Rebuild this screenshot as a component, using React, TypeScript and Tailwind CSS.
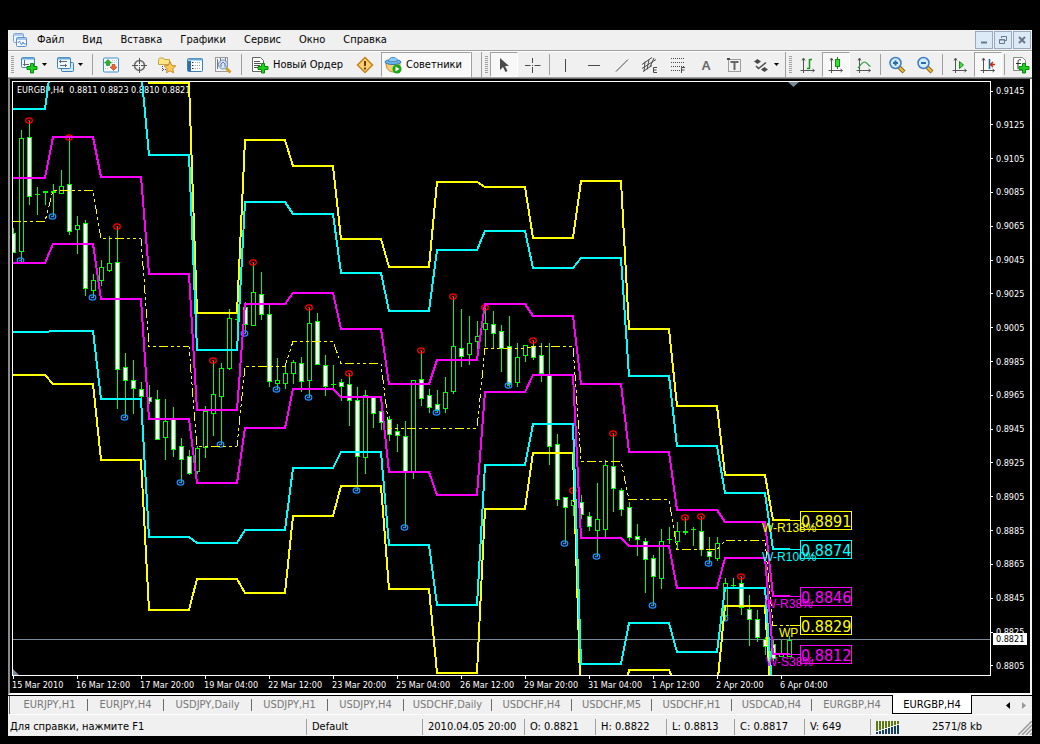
import type { ReactNode } from 'react'

const UI_FONT = "font-['DejaVu_Sans_Condensed','Noto_Sans',sans-serif]"

const MENU = ['Файл', 'Вид', 'Вставка', 'Графики', 'Сервис', 'Окно', 'Справка']

const TABS = [
  { name: 'EURJPY,H1', width: 'w-[76px]' },
  { name: 'EURJPY,H4', width: 'w-[76px]' },
  { name: 'USDJPY,Daily', width: 'w-[88px]' },
  { name: 'USDJPY,H1', width: 'w-[76px]' },
  { name: 'USDJPY,H4', width: 'w-[76px]' },
  { name: 'USDCHF,Daily', width: 'w-[88px]' },
  { name: 'USDCHF,H4', width: 'w-20' },
  { name: 'USDCHF,M5', width: 'w-20' },
  { name: 'USDCHF,H1', width: 'w-20' },
  { name: 'USDCAD,H4', width: 'w-20' },
  { name: 'EURGBP,H4', width: 'w-20' },
]

const PRICES = [
  '0.9145', '0.9125', '0.9105', '0.9085', '0.9065', '0.9045', '0.9025', '0.9005', '0.8985',
  '0.8965', '0.8945', '0.8925', '0.8905', '0.8885', '0.8865', '0.8845', '0.8825', '0.8805',
]

const TIMES = [
  '15 Mar 2010', '16 Mar 12:00', '17 Mar 20:00', '19 Mar 04:00', '22 Mar 12:00', '23 Mar 20:00',
  '25 Mar 04:00', '26 Mar 12:00', '29 Mar 20:00', '31 Mar 04:00', '1 Apr 12:00', '2 Apr 20:00', '6 Apr 04:00',
]

// high, body top, body bottom, low, 1 = bearish. One candle every 8px from x = 13
const CANDLES = [
  [228, 233, 252, 252, 1], [130, 138, 251, 262, 0], [121, 137, 196, 204, 1], [187, 194, 194, 214, 0],
  [191, 191, 192, 204, 0], [184, 191, 192, 216, 0], [170, 186, 193, 193, 0], [137, 184, 231, 234, 1],
  [216, 225, 229, 253, 0], [220, 223, 288, 295, 1], [274, 280, 290, 296, 0], [260, 267, 280, 285, 0],
  [236, 263, 270, 271, 0], [226, 262, 369, 408, 1], [353, 367, 380, 417, 1], [360, 380, 388, 413, 1],
  [382, 389, 396, 398, 1], [385, 397, 401, 403, 1], [390, 399, 439, 439, 1], [399, 421, 437, 459, 0],
  [407, 419, 449, 456, 1], [438, 446, 459, 482, 1], [450, 456, 473, 474, 1], [446, 448, 471, 473, 0],
  [406, 411, 447, 457, 0], [360, 394, 413, 435, 0], [363, 368, 396, 443, 0], [309, 318, 368, 369, 0],
  [312, 319, 319, 322, 0], [302, 307, 324, 333, 1], [262, 292, 325, 325, 0], [272, 294, 314, 319, 1],
  [304, 314, 381, 386, 1], [358, 380, 383, 388, 0], [367, 373, 383, 388, 0], [360, 362, 373, 383, 0],
  [357, 363, 381, 391, 1], [307, 323, 380, 396, 0], [313, 321, 364, 364, 1], [355, 365, 386, 395, 1],
  [365, 384, 384, 388, 0], [379, 382, 386, 400, 1], [373, 384, 400, 425, 1], [387, 400, 456, 490, 1],
  [390, 395, 457, 473, 0], [396, 397, 413, 427, 1], [407, 411, 422, 429, 1], [416, 419, 434, 440, 1],
  [424, 431, 435, 451, 1], [421, 436, 471, 526, 1], [380, 380, 472, 478, 0], [350, 379, 398, 405, 1],
  [389, 395, 407, 412, 1], [390, 404, 410, 412, 1], [377, 392, 408, 412, 0], [296, 346, 391, 393, 0],
  [309, 348, 356, 366, 1], [316, 343, 354, 364, 0], [321, 336, 341, 348, 0], [307, 323, 329, 346, 0],
  [311, 324, 333, 348, 1], [325, 331, 348, 371, 1], [316, 346, 384, 386, 1], [343, 357, 382, 386, 0],
  [345, 345, 355, 361, 0], [340, 346, 357, 359, 1], [343, 355, 373, 381, 1], [343, 375, 446, 464, 1],
  [434, 444, 499, 505, 1], [497, 497, 507, 543, 1], [490, 500, 505, 515, 0], [495, 502, 514, 518, 1],
  [512, 516, 526, 530, 1], [483, 519, 530, 555, 0], [460, 465, 529, 537, 0], [433, 466, 488, 511, 1],
  [488, 490, 509, 515, 1], [502, 507, 537, 540, 1], [524, 536, 539, 555, 1], [538, 541, 559, 592, 1],
  [555, 558, 576, 604, 1], [529, 541, 578, 588, 0], [527, 539, 539, 543, 0], [522, 531, 541, 549, 0],
  [517, 531, 532, 534, 0], [527, 529, 529, 545, 0], [516, 531, 549, 555, 1], [537, 551, 556, 562, 1],
  [537, 543, 558, 560, 0], [578, 583, 615, 619, 0], [578, 585, 585, 587, 0], [576, 583, 607, 614, 1],
  [595, 609, 619, 645, 1], [610, 619, 637, 641, 1], [637, 639, 646, 654, 1], [640, 644, 658, 660, 1],
  [640, 654, 656, 656, 0], [636, 640, 656, 656, 0],
]

const PEAKS = [
  [29, 120], [69, 137], [117, 226], [213, 360], [253, 262], [309, 307], [349, 373], [421, 350], [453, 296],
  [485, 307], [533, 340], [573, 490], [613, 433], [685, 517], [701, 516], [741, 576],
]
const LOWS = [
  [21, 260], [53, 216], [93, 297], [125, 417], [181, 482], [221, 444], [245, 333], [277, 389], [309, 397],
  [357, 490], [405, 527], [437, 412], [509, 385], [565, 543], [597, 556], [653, 605], [709, 563], [725, 618],
]

// one level per period, 48px wide
const LEVELS = [
  { color: '#ffff00', y: [-60, -60, -60, 83, 313, 140, 166, 239, 267, 182, 187, 238, 181, 329, 406, 475, 520] },
  { color: '#ffff00', y: [375, 384, 460, 610, 579, 593, 516, 486, 589, 673, 509, 453, 710, 670, 688, 606, 730] },
  { color: '#00ffff', y: [109, 50, 70, 155, 350, 202, 214, 273, 311, 250, 231, 268, 258, 376, 446, 493, 549] },
  { color: '#00ffff', y: [332, 331, 399, 537, 543, 530, 468, 452, 545, 605, 465, 424, 664, 623, 652, 588, 700] },
  { color: '#ff00ff', y: [178, 137, 177, 274, 410, 304, 293, 329, 384, 360, 304, 316, 384, 452, 510, 522, 596] },
  { color: '#ff00ff', y: [263, 244, 299, 419, 483, 428, 389, 397, 472, 495, 392, 375, 538, 546, 588, 558, 654] },
]
const PIVOT = [221, 190, 238, 346, 446, 366, 341, 363, 428, 428, 348, 346, 461, 499, 549, 540, 625]

const TAGS = [
  { price: '0.8891', name: 'W-R138%', y: 520, nameX: 762, color: '#ffff00' },
  { price: '0.8874', name: 'W-R100%', y: 549, nameX: 762, color: '#00ffff' },
  { price: '0.8846', name: 'W-R38%', y: 596, nameX: 765, color: '#ff00ff' },
  { price: '0.8829', name: 'WP', y: 625, nameX: 779, color: '#ffff00' },
  { price: '0.8812', name: 'W-S38%', y: 654, nameX: 766, color: '#ff00ff' },
]

function stairs(levels: number[], half = 0) {
  return levels
    .map((y, i) => {
      const start = i === 0 ? 12 : 5 + i * 48
      const end = i === levels.length - 1 ? 790 : 45 + i * 48
      return `${start},${y + half} ${end},${y + half}`
    })
    .join(' ')
}

function Plot() {
  return (
    <svg className="block h-full w-full" role="img" aria-label="EURGBP,H4">
      <g transform="translate(-13,-82)">
        <text x="17" y="93" fill="#fff" className="whitespace-pre text-[9px]">
          {'EURGBP,H4  0.8811 0.8823 0.8810 0.8821'}
        </text>
        <path d="M788 82h11l-5.500 5z M13 669v6h6z" fill="#778899" />
        <g shapeRendering="crispEdges">
          <rect x="13" y="639" width="100%" height="1" fill="#778899" />
          {CANDLES.map(([high, top, bottom, low, down], i) => {
            const x = 13 + i * 8
            return (
              <g key={x}>
                <rect x={x} y={high} width="1" height={low - high + 1} fill="#00ff00" />
                <rect x={x - 2} y={top} width="5" height={bottom - top + 1} fill="#00ff00" />
                {bottom - top > 1 && (
                  <rect x={x - 1} y={top + 1} width="3" height={bottom - top - 1} fill={down ? '#fff' : '#000'} />
                )}
              </g>
            )
          })}
        </g>
        {PEAKS.map(([x, y]) => (
          <g key={x} stroke="#ff0000" fill="none">
            <ellipse cx={x} cy={y + 0.5} rx="3.300" ry="2.600" strokeWidth="1.200" />
            <path d={`M${x - 1} ${y + 0.5}h2`} strokeWidth="1.500" />
          </g>
        ))}
        {LOWS.map(([x, y]) => (
          <g key={x} stroke="#1e90ff" fill="none">
            <ellipse cx={x - 0.5} cy={y + 0.5} rx="3.300" ry="2.600" strokeWidth="1.200" />
            <path d={`M${x - 2} ${y + 0.5}h3`} strokeWidth="1.500" />
          </g>
        ))}
        <g fill="none" shapeRendering="crispEdges">
          <polyline points={stairs(PIVOT, 0.5)} stroke="#ffff00" strokeDasharray="9 3 3 3 3 3" />
          {LEVELS.map((level, i) => (
            <polyline key={i} points={stairs(level.y)} stroke={level.color} strokeWidth="2" />
          ))}
        </g>
        {TAGS.map(tag => (
          <g key={tag.price}>
            <path d={`M790 ${tag.y + 0.5}h10`} stroke={tag.color} />
            <rect x="800.5" y={tag.y - 8.5} width="51" height="18" fill="none" stroke={tag.color} />
            <text x="801" y={tag.y + 7} fill={tag.color} className="text-[16px]">{tag.price}</text>
            <text x={tag.nameX} y={tag.y + 12} fill={tag.color} className="font-['Liberation_Sans',sans-serif] text-xs">
              {tag.name}
            </text>
          </g>
        ))}
      </g>
    </svg>
  )
}

function Svg({ children, w = 18 }: { children: ReactNode; w?: number }) {
  return (
    <svg width={w} height="18" viewBox={`0 0 ${w} 18`} fill="none" aria-hidden="true" className="shrink-0">
      {children}
    </svg>
  )
}

function Tool({ label, pressed = false, children }: { label: string; pressed?: boolean; children: ReactNode }) {
  return (
    <button
      aria-label={label}
      className={
        pressed
          ? 'flex w-7 shrink-0 items-center justify-center border border-t-[#a0a0a0] border-r-white border-b-white border-l-[#a0a0a0] bg-[#f8f8f8]'
          : 'flex w-7 shrink-0 items-center justify-center'
      }
    >
      <Svg>{children}</Svg>
    </button>
  )
}

function DropTool({ label, children }: { label: string; children: ReactNode }) {
  return (
    <button aria-label={label} className="flex w-9 shrink-0 items-center gap-1 pl-1">
      <Svg>{children}</Svg>
      <svg width="5" height="3" viewBox="0 0 5 3" aria-hidden="true"><path d="M0 0h5L2.500 3z" fill="#000" /></svg>
    </button>
  )
}

function Separator({ width = 'w-[9px]' }: { width?: string }) {
  return (
    <div className={`flex shrink-0 justify-center ${width}`}>
      <div className="my-0.5 w-px bg-[#a0a0a0]" />
    </div>
  )
}

function Grip() {
  return (
    <div className="flex w-2 shrink-0 justify-center py-1">
      <svg width="3" height="18" aria-hidden="true">
        <path d="M1.500 0v18" stroke="#a0a0a0" strokeWidth="3" strokeDasharray="1 1" />
      </svg>
    </div>
  )
}

const plus = (
  <path d="M10.500 7.500h3v3h3.500v3h-3.500v3.500h-3v-3.500H7v-3h3.500z" fill="#1fd11f" stroke="#0a8a0a" />
)
const axes = <path d="M4.500 2v15M1.500 14.500h14M3 4.500l1.500-2.500 1.500 2.500M13.500 13l2 1.500-2 1.500" stroke="#555" />

function Magnifier({ sign }: { sign: string }) {
  return (
    <>
      <path d="M11 11l5 5" stroke="#8a6410" strokeWidth="4" />
      <path d="M11 11l4.500 4.500" stroke="#f2c33d" strokeWidth="2" />
      <circle cx="7.500" cy="7" r="5.500" fill="#d3ecfc" stroke="#3c7cc4" strokeWidth="1.500" />
      <path d={sign} stroke="#3069a8" strokeWidth="2" />
    </>
  )
}

function Toolbar() {
  return (
    <div className="flex h-[26px] overflow-hidden border-t border-white bg-[#f0f0f0]">
      <Grip />
      <DropTool label="Новый график">
        <rect x="1.500" y="1.500" width="13" height="10" rx="1" fill="#eef7fd" stroke="#3f80b5" />
        <path d="M2 2.500h12" stroke="#69a8d8" strokeWidth="2" />
        <path d="M4.500 4v6M3 8.500h6" stroke="#667" />
        {plus}
      </DropTool>
      <DropTool label="Профили">
        <rect x="5.500" y="6.500" width="12" height="9" rx="1" fill="#d4e8f6" stroke="#3f80b5" />
        <rect x="1.500" y="1.500" width="13" height="11" rx="1" fill="#eef7fd" stroke="#3f80b5" />
        <path d="M2 2.500h12" stroke="#69a8d8" strokeWidth="2" />
        <path d="M4.500 4v3M3 5.500h8M4 9.500h7M9.500 8v3" stroke="#668" />
      </DropTool>
      <Separator />
      <Tool label="Обзор рынка">
        <rect x="1.500" y="2" width="15" height="14" rx="1" fill="#f5fbff" stroke="#3f8fd0" />
        <path d="M6 3.500l3.500 3.500H7.500v2.500h-3V7H2.500z" fill="#28b828" stroke="#0d7a1b" strokeWidth=".6" />
        <path d="M11.500 14.500L8 11h2V8.500h3V11h2z" fill="#f06830" stroke="#b03410" strokeWidth=".6" />
        <path d="M10 4.500h5M10 6.500h5M3 12.500h4" stroke="#b9c4d0" strokeDasharray="1 1" />
      </Tool>
      <Tool label="Окно данных">
        <circle cx="9.500" cy="9.500" r="5" stroke="#666" strokeWidth="1.500" />
        <path d="M9.500 2v6M9.500 11v6M2 9.500h6M11 9.500h6M9 9.500h1" stroke="#555" />
      </Tool>
      <Tool label="Навигатор">
        <path d="M.5 8.500V3.500l1-1.500h4l1 1.500h5v5z" fill="#fbe58a" stroke="#c8a43c" />
        <path d="M4.500 10v6M5 13.500h4" stroke="#444" strokeDasharray="1 1" />
        <path d="M12 5.500l1.800 3.900 4 .5-3 2.800.8 4.100-3.600-2-3.600 2 .8-4.100-3-2.800 4-.5z" fill="#fccb52" stroke="#b87815" strokeWidth=".8" />
      </Tool>
      <Tool label="Терминал">
        <rect x="1.500" y="2.500" width="15" height="13" rx="1" fill="#fff" stroke="#3c7fb8" />
        <path d="M2 3.500h14" stroke="#69a8d8" strokeWidth="2" />
        <path d="M3.500 5v10" stroke="#2f6ea8" strokeWidth="3" />
        <path d="M7 6.500h8M7 9.500h8M7 12.500h8" stroke="#9ab" strokeDasharray="1 1" />
        <path d="M6 6.500h1M6 9.500h1M6 12.500h1" stroke="#223" />
      </Tool>
      <Tool label="Тестер стратегий">
        <rect x="1.500" y="1.500" width="12" height="14" fill="#f3f3f3" stroke="#9a9a9a" />
        <path d="M3.500 3v10M6.500 2v8M11.500 2v8" stroke="#777" />
        <path d="M12 12l4.500 4.500" stroke="#d3a02b" strokeWidth="3" />
        <circle cx="9" cy="8.500" r="4.500" fill="#cfe6f8" fillOpacity=".8" stroke="#5c8fbc" />
        <path d="M7 11V8l2-2 2 2v3" stroke="#64a" strokeWidth=".8" />
      </Tool>
      <Separator />
      <button className="flex w-[105px] shrink-0 items-center gap-1 pl-[5px] text-[11px] whitespace-nowrap">
        <Svg>
          <path d="M1.500 1.500h8l3 3v11h-11z" fill="#fff" stroke="#666" />
          <path d="M3 5.500h6M3 7.500h7M3 9.500h6M3 11.500h4" stroke="#555" />
          {plus}
        </Svg>
        <span className="pt-0.5">Новый Ордер</span>
      </button>
      <Tool label="MetaEditor">
        <path d="M9 1.500L16.500 9 9 16.500 1.500 9z" fill="#fbd070" stroke="#c4821a" strokeWidth="1.500" />
        <path d="M9 5v5M9 11.500v2" stroke="#6b3a06" strokeWidth="2" />
      </Tool>
      <button
        aria-pressed="true"
        className="ml-0.5 flex w-[90px] shrink-0 items-center gap-1 border border-t-[#a0a0a0] border-r-white border-b-white border-l-[#a0a0a0] bg-[#f8f8f8] pl-0.5 text-[11px] whitespace-nowrap"
      >
        <Svg>
          <path d="M2 7c0 6 3 9 8 9 4 0 6-4 6-9z" fill="#f6ce73" stroke="#b98a38" />
          <ellipse cx="9" cy="6" rx="8" ry="2.500" fill="#6ab4e8" stroke="#3878ad" />
          <path d="M4.500 5.500C4.500 0 13.500 0 13.500 5.500z" fill="#8accf3" stroke="#4a8fc5" />
          <circle cx="13" cy="13" r="4.500" fill="#18a818" />
          <path d="M11.500 10.500v5l4-2.500z" fill="#fff" />
        </Svg>
        <span className="pt-0.5">Советники</span>
      </button>
      <div className="w-[11px] shrink-0 border-r border-l border-[#a0a0a0]" />
      <Grip />
      <Tool label="Курсор" pressed>
        <path d="M5 2v12l3-3 2.500 5 2-1-2.500-5h4z" fill="#4a4a4a" />
      </Tool>
      <Tool label="Перекрестие">
        <path d="M9.500 2v5M9.500 11v6M2 9.500h5.500M11.500 9.500h6M9 9.500h1" stroke="#4a4a4a" />
      </Tool>
      <Separator width="w-1.5" />
      <Tool label="Вертикальная линия"><path d="M8.500 3v13" stroke="#4a4a4a" /></Tool>
      <Tool label="Горизонтальная линия"><path d="M3 9.500h12" stroke="#4a4a4a" /></Tool>
      <Tool label="Трендовая линия"><path d="M3 15.500L15 3.500" stroke="#4a4a4a" /></Tool>
      <Tool label="Равноудаленный канал">
        <path d="M1 8.500L11 1.500M1 12.500l14-9M2 15.500l9-6M4 5.500L3 15.500M8 3.500L6 13.500M13 2L9 11" stroke="#4a4a4a" />
        <path d="M16 11.500h-3.500v5H16M12.500 14H15.500" stroke="#4a4a4a" />
      </Tool>
      <Tool label="Линии Фибоначчи">
        <path d="M2 2.500h14M2 6.500h14M2 10.500h14M2 14.500h9" stroke="#4a4a4a" strokeDasharray="1 1" />
        <path d="M16 11.500h-3.500v5.500M12.500 14h3" stroke="#4a4a4a" />
      </Tool>
      <button aria-label="Текст" className="w-7 shrink-0 pt-0.5 font-['Noto_Sans',sans-serif] text-[13px] font-semibold text-[#666]">A</button>
      <Tool label="Текстовая метка">
        <rect x="3.500" y="3.500" width="12" height="12" stroke="#4a4a4a" strokeDasharray="1 1" />
        <path d="M2 2h3v2H2z" fill="#4a4a4a" />
        <path d="M5.500 6h8M9.500 6v8" stroke="#666" strokeWidth="2" />
      </Tool>
      <DropTool label="Стрелки">
        <path d="M2 5.500L5.500 3 9 5.500 5.500 8z M9 13.500l3.500-2.500 3.500 2.500-3.500 2.500z" fill="#4a4a4a" />
        <path d="M4 10l2.500 2.500L14 6.500" stroke="#4a4a4a" strokeWidth="1.500" />
      </DropTool>
      <div className="w-0.5 shrink-0 border-r border-[#a0a0a0]" />
      <Grip />
      <Tool label="Бары">
        {axes}
        <path d="M10.500 3v10M10.500 3.500H13M8 12.500h2.500" stroke="#159915" strokeWidth="1.500" />
      </Tool>
      <Tool label="Японские свечи" pressed>
        {axes}
        <path d="M10.500 1v12" stroke="#158015" />
        <rect x="8.500" y="3.500" width="4" height="7" fill="#34e034" stroke="#129012" />
      </Tool>
      <Tool label="Линия">
        {axes}
        <path d="M3 12c2-2 4-6 6.500-6s3 3 6 4.500" stroke="#2c9a3c" strokeWidth="1.200" />
      </Tool>
      <Separator width="w-[5px]" />
      <Tool label="Увеличить"><Magnifier sign="M5 7h5M7.500 4.500v5" /></Tool>
      <Tool label="Уменьшить"><Magnifier sign="M5 7h5" /></Tool>
      <Separator width="w-[7px]" />
      <Tool label="Автопрокрутка">
        {axes}
        <path d="M8.500 5.500v7l4-3.500z" fill="#45dd45" stroke="#159015" />
      </Tool>
      <Tool label="Сдвиг графика" pressed>
        {axes}
        <path d="M10.500 3v10" stroke="#1565a8" strokeWidth="1.500" />
        <path d="M16 8.500h-4M14 6l-2.500 2.500L14 11" stroke="#b83212" strokeWidth="1.500" />
      </Tool>
      <Separator width="w-[5px]" />
      <Tool label="Индикаторы">
        <path d="M1.500 1.500h9l3 3v10h-12z" fill="#fff" stroke="#888" />
        <path d="M9 4c-2-1-3 0-3 2v7M4 7.500h5" stroke="#333" />
        {plus}
      </Tool>
    </div>
  )
}

function WindowButton({ label, children }: { label: string; children: ReactNode }) {
  return (
    <button aria-label={label} className="flex h-[18px] w-[18px] items-center justify-center border border-[#9aaabd] bg-[#dce9f6]">
      <svg width="10" height="10" viewBox="0 0 10 10" fill="none" stroke="#66788e" aria-hidden="true">{children}</svg>
    </button>
  )
}

function MenuBar() {
  return (
    <div className="flex h-5 items-center bg-[#f0f0f0] pl-1">
      <svg width="16" height="16" viewBox="0 0 16 16" fill="none" aria-hidden="true" className="mr-[9px]">
        <rect x="1.500" y="1.500" width="10" height="9" rx="1" fill="#eef5ff" stroke="#7aa3d8" />
        <path d="M2 3h9M4 7h2l1-2 1 3" stroke="#7aa3d8" />
        <rect x="4.500" y="5.500" width="10" height="9" rx="1" fill="#f7fbff" stroke="#5b8fd0" />
        <path d="M5 7h9M6 11l1.500-2 2 4 1.500-3 1 2h2" stroke="#5b8fd0" />
      </svg>
      <nav className="flex gap-[18px] pt-px text-[11px]">
        {MENU.map(item => (
          <button key={item}>{item}</button>
        ))}
      </nav>
      <div className="ml-auto flex gap-px pr-px">
        <WindowButton label="Свернуть"><path d="M2 7.500h6" strokeWidth="2" /></WindowButton>
        <WindowButton label="Восстановить">
          <path d="M3.500 3V1.500h5v4H7M1.500 4.500h5v4h-5z M1.500 5h5" />
        </WindowButton>
        <WindowButton label="Закрыть"><path d="M2 2l6 6M8 2L2 8" strokeWidth="2" /></WindowButton>
      </div>
    </div>
  )
}

function Chart() {
  return (
    <div className="flex h-[616px] border-2 border-t-0 border-l-[#8a8a8a] border-r-[#f4f4f4] border-b-white bg-black text-[9px] leading-3 text-white">
      <div className="flex min-w-0 flex-1 flex-col pt-0.5 pl-0.5">
        <div className="h-[595px] border border-white">
          <Plot />
        </div>
        <div className="flex overflow-hidden">
          {TIMES.map(time => (
            <div key={time} className="w-16 shrink-0 whitespace-nowrap">
              <div className="ml-px h-[3px] w-px bg-white" />
              {time}
            </div>
          ))}
        </div>
      </div>
      <div className="relative mt-1.5 flex h-[587px] w-[39px] shrink-0 flex-col justify-between">
        {PRICES.map(price => (
          <div key={price} className="flex items-center gap-[3px]">
            <div className="h-px w-0.5 bg-white" />
            {price}
          </div>
        ))}
        <div className="absolute top-[548px] left-0.5 bg-white px-[3px] text-black">0.8821</div>
      </div>
    </div>
  )
}

function Tabs() {
  return (
    <div className="flex h-5 border-t border-b border-t-black border-b-white bg-[#f0f0f0] text-[11px] leading-4 text-[#777]">
      <div className="mr-0.5 w-0.5 shrink-0 border-r border-[#696969]" />
      {TABS.map((tab, i) => (
        <button key={i} className={`flex shrink-0 items-center ${tab.width}`}>
          <span className="flex-1">{tab.name}</span>
          {i < TABS.length - 1 && <span className="h-3 w-px bg-[#696969]" />}
        </button>
      ))}
      <button className="-mt-px w-20 shrink-0 border border-t-0 border-black bg-white pt-px text-black">EURGBP,H4</button>
      <div className="ml-auto flex items-center gap-3 pr-1.5">
        <button aria-label="Назад"><svg width="4" height="7" className="block" aria-hidden="true"><path d="M4 0v7L0 3.500z" fill="#000" /></svg></button>
        <button aria-label="Вперед"><svg width="4" height="7" className="block" aria-hidden="true"><path d="M0 0v7l4-3.500z" fill="#999" /></svg></button>
      </div>
    </div>
  )
}

function Field({ width, children }: { width: string; children: ReactNode }) {
  return <div className={`mt-1 mb-px shrink-0 border-l border-[#a0a0a0] pl-[5px] leading-4 whitespace-nowrap ${width}`}>{children}</div>
}

function StatusBar() {
  return (
    <div className="flex h-[21px] items-stretch bg-[#f0f0f0] text-[11px] text-black">
      <div className="min-w-0 flex-1 truncate pt-1 pl-0.5 leading-4">Для справки, нажмите F1</div>
      <Field width="w-[116px]">Default</Field>
      <Field width="w-[102px]">2010.04.05 20:00</Field>
      <Field width="w-[71px]">O: 0.8821</Field>
      <Field width="w-[71px]">H: 0.8822</Field>
      <Field width="w-[68px]">L: 0.8813</Field>
      <Field width="w-[70px]">C: 0.8817</Field>
      <Field width="w-[66px]">V: 649</Field>
      <Field width="w-[162px]">
        <div className="flex items-center">
          <svg width="24" height="13" aria-hidden="true">
            {[0, 1, 2, 3, 4, 5, 6, 7].map(i => (
              <g key={i}>
                <rect x={i * 3} y="0" width="2" height={10 - i} fill="#5b7a14" />
                <rect x={i * 3} y={11 - i} width="2" height={2 + i} fill="#123f5c" />
              </g>
            ))}
          </svg>
          <span className="ml-8">2571/8 kb</span>
          <svg width="14" height="14" className="ml-auto self-end" aria-hidden="true">
            <path d="M0 14L14 0M4 14L14 4M8 14l6-6M12 14l2-2" stroke="#999" strokeWidth="1.500" />
          </svg>
        </div>
      </Field>
    </div>
  )
}

export default function App() {
  return (
    <div className={`min-h-screen bg-black px-2 pt-[30px] pb-2 text-black ${UI_FONT}`}>
      <MenuBar />
      <div className="h-px bg-[#a0a0a0]" />
      <Toolbar />
      <div className="h-0.5 border-t border-[#a0a0a0] bg-[#696969]" />
      <Chart />
      <Tabs />
      <StatusBar />
    </div>
  )
}
